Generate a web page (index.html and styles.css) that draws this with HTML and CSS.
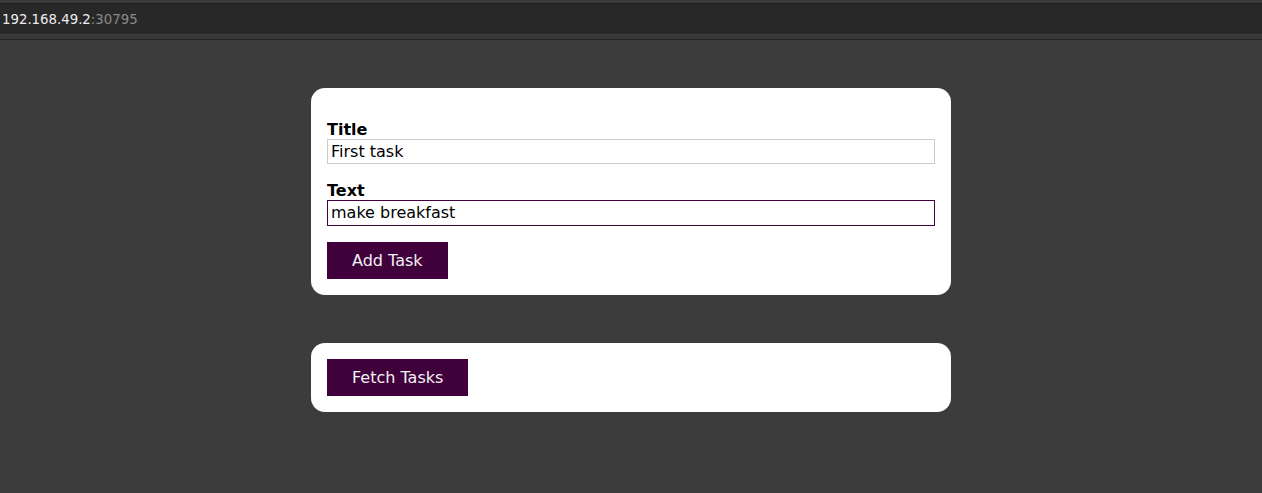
FILE: index.html
```html
<!DOCTYPE html>
<html>
<head>
<meta charset="utf-8">
<link rel="stylesheet" href="styles.css">
</head>
<body>
<div class="chrome">
  <div class="chrome-top"></div>
  <div class="urlbar"><span class="host">192.168.49.2</span><span class="port">:30795</span></div>
  <div class="chrome-bottom"></div>
</div>
<main class="page">
  <section class="card card-form">
    <div class="field">
      <label class="label">Title</label>
      <input class="input" type="text" value="First task">
    </div>
    <div class="field field-second">
      <label class="label">Text</label>
      <input class="input input-focus" type="text" value="make breakfast">
    </div>
    <div class="actions"><button class="btn">Add Task</button></div>
  </section>
  <section class="card">
    <div><button class="btn">Fetch Tasks</button></div>
  </section>
</main>
</body>
</html>
```
FILE: styles.css
```css
html, body {
  margin: 0;
  padding: 0;
  background: #3c3c3c;
  font-family: "DejaVu Sans", sans-serif;
  height: 100%;
}
.chrome {
  display: flex;
  flex-direction: column;
}
.chrome-top {
  height: 3px;
  background: #3a3a3a;
  border-bottom: 1px solid #1f1f1f;
}
.urlbar {
  height: 30px;
  background: #282828;
  border-bottom: 1px solid #3e3e3e;
  display: flex;
  align-items: center;
  padding-left: 2px;
  font-size: 13.3px;
  font-family: "DejaVu Sans", sans-serif;
}
.host { color: #ececec; }
.port { color: #8a8a8a; }
.chrome-bottom {
  height: 4px;
  background: #393939;
  border-bottom: 1px solid #222;
}
.page {
  display: flex;
  flex-direction: column;
  align-items: center;
  gap: 48px;
  padding-top: 48px;
}
.card {
  width: 640px;
  box-sizing: border-box;
  background: #fff;
  border-radius: 14px;
  padding: 16px;
  display: flex;
  flex-direction: column;
  gap: 16px;
}
.card-form {
  padding-top: 32px;
}
.field-second {
  margin-top: 1px;
}
.field {
  display: flex;
  flex-direction: column;
}
.label {
  font-weight: bold;
  font-size: 16px;
  line-height: 19px;
  color: #000;
}
.input {
  font-family: "DejaVu Sans", sans-serif;
  font-size: 16px;
  line-height: 19px;
  height: 25px;
  box-sizing: border-box;
  padding: 2px 3px;
  border: 1px solid #cccccc;
  margin: 0;
  outline: none;
  color: #000;
}
.input-focus {
  border-color: #3f003c;
  height: 26px;
  padding-top: 1px;
}
.btn {
  font-family: "DejaVu Sans", sans-serif;
  font-size: 16px;
  height: 37px;
  padding: 0 25px;
  background: #3f003c;
  color: #f2f2f2;
  border: none;
  margin: 0;
  cursor: pointer;
}
```
